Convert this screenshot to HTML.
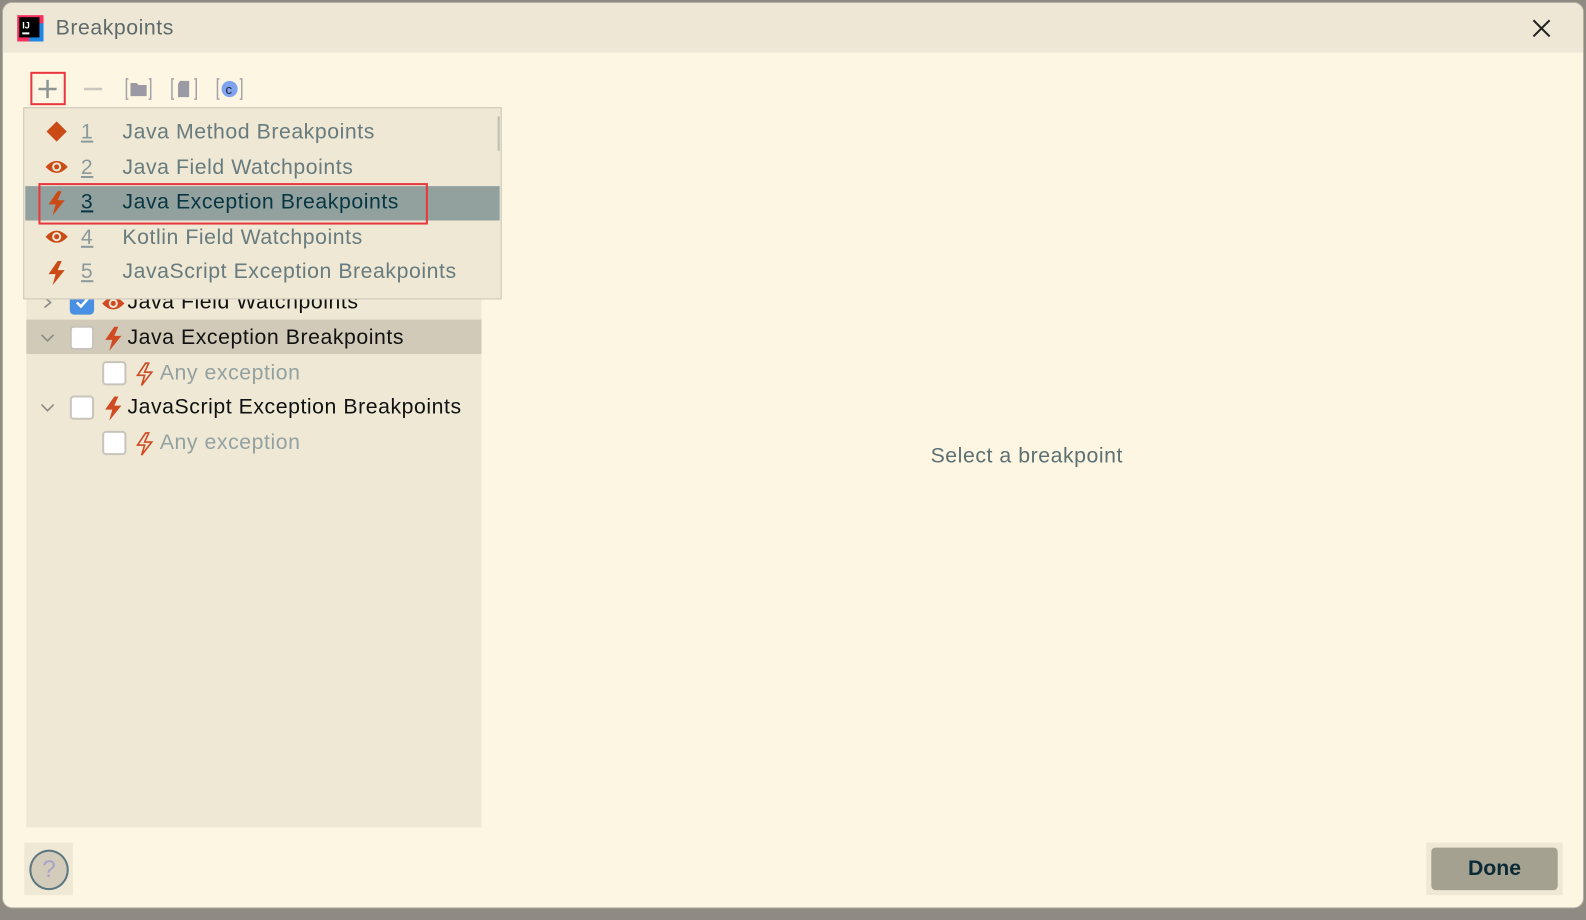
<!DOCTYPE html>
<html><head><style>
*{margin:0;padding:0;box-sizing:border-box}
body{width:1586px;height:910px;background:#8f8b82;font-family:"Liberation Sans","DejaVu Sans",sans-serif;position:relative;overflow:hidden}
.wrap{position:absolute;left:0;top:0;width:1586px;height:910px;transform:scale(1.0115);transform-origin:0 0}
.dlg{position:absolute;left:2px;top:2px;width:1564px;height:896px;background:#fdf6e3;border-radius:10px;overflow:hidden;border:1px solid #b5b0a5}
.title{position:absolute;left:0;top:0;right:0;height:49px;background:#eee7d5}
.abs{position:absolute}
.txt{font-size:21px;white-space:nowrap;letter-spacing:0.55px}
.cb{position:absolute;width:24px;height:24px;border:2px solid #c8c4bb;border-radius:4px;background:#fff}
</style></head><body>
<div class="wrap">
<div class="dlg">
 <div class="title">
  <svg class="abs" style="left:12px;top:10px" width="30" height="30"><rect x="2" y="2" width="26" height="26" fill="#f9305f"/><rect x="14" y="10" width="14" height="18" fill="#1e88e5"/><rect x="4" y="4" width="20" height="20" fill="#000"/><text x="7" y="15" fill="#fff" font-size="9" font-weight="bold" font-family="Liberation Sans">IJ</text><rect x="7" y="19" width="7" height="2" fill="#fff"/></svg>
  <div class="abs txt" style="left:52px;top:13px;color:#5f6a6b">Breakpoints</div>
  <svg class="abs" style="left:1511px;top:15px" width="20" height="20"><path d="M2 2L18 18M18 2L2 18" stroke="#222" stroke-width="2"/></svg>
 </div>
 <div class="abs" style="left:27px;top:68px;width:35px;height:33px;border:2px solid #e8383d"></div>
 <svg class="abs" style="left:33px;top:74px" width="22" height="22"><path d="M11 2V20M2 11H20" stroke="#8d9496" stroke-width="2.5"/></svg>
 <svg class="abs" style="left:78px;top:74px" width="22" height="22"><path d="M2 11H20" stroke="#c9c7c0" stroke-width="2.5"/></svg>
 <svg class="abs" style="left:121px;top:73px" width="26" height="24"><path d="M3 2H1V22H3M23 2H25V22H23" stroke="#a5a3a8" stroke-width="1.5" fill="none"/><path d="M5 6H11L13 8H21V19H5Z" fill="#9b9aa4"/></svg>
 <svg class="abs" style="left:166px;top:73px" width="26" height="24"><path d="M3 2H1V22H3M23 2H25V22H23" stroke="#a5a3a8" stroke-width="1.5" fill="none"/><path d="M9 4H18V20H7V7Z" fill="#9b9aa4"/></svg>
 <svg class="abs" style="left:211px;top:73px" width="26" height="24"><path d="M3 2H1V22H3M23 2H25V22H23" stroke="#a5a3a8" stroke-width="1.5" fill="none"/><circle cx="13" cy="12" r="8" fill="#7fa3ee"/><text x="9" y="17" font-size="13" font-family="Liberation Sans" fill="#223">c</text></svg>
 <div class="abs" style="left:23px;top:103px;width:450px;height:712px;background:#eee8d5"></div>
 <div class="abs" style="left:23px;top:313px;width:450px;height:34px;background:#d1cab9"></div>
 <svg class="abs" style="left:36px;top:288px" width="16" height="16"><path d="M5 3L11 8L5 13" stroke="#8a8a86" stroke-width="1.6" fill="none"/></svg>
 <div class="cb" style="left:66px;top:284px;background:#4a90e2;border-color:#4a90e2"></div>
 <svg class="abs" style="left:69px;top:286px" width="20" height="20"><path d="M4 10L8 14L16 5" stroke="#fff" stroke-width="2.5" fill="none"/></svg>
 <svg class="abs" style="left:97px;top:287px" width="24" height="20"><path d="M1 10Q12 -2 23 10Q12 22 1 10Z" fill="#d04a22"/><circle cx="12" cy="10" r="4.5" fill="#eee8d5"/><circle cx="12" cy="10" r="2.5" fill="#d04a22"/></svg>
 <div class="abs txt" style="left:123px;top:284px;color:#111">Java Field Watchpoints</div>
 <svg class="abs" style="left:36px;top:323px" width="16" height="16"><path d="M2 5L8 11L14 5" stroke="#8a8a86" stroke-width="1.6" fill="none"/></svg>
 <div class="cb" style="left:66px;top:319px"></div>
 <svg class="abs" style="left:99px;top:319px" width="20" height="26"><path d="M11 1L2 14H9L6 25L18 10H11L15 1Z" fill="#d04a22"/></svg>
 <div class="abs txt" style="left:123px;top:319px;color:#111">Java Exception Breakpoints</div>
 <div class="cb" style="left:98px;top:354px"></div>
 <svg class="abs" style="left:130px;top:354px" width="20" height="26"><path d="M11 2L3 14H10L7 24L17 11H10L14 2Z" fill="none" stroke="#d04a22" stroke-width="1.6"/></svg>
 <div class="abs txt" style="left:155px;top:354px;color:#93a1a1">Any exception</div>
 <svg class="abs" style="left:36px;top:392px" width="16" height="16"><path d="M2 5L8 11L14 5" stroke="#8a8a86" stroke-width="1.6" fill="none"/></svg>
 <div class="cb" style="left:66px;top:388px"></div>
 <svg class="abs" style="left:99px;top:388px" width="20" height="26"><path d="M11 1L2 14H9L6 25L18 10H11L15 1Z" fill="#d04a22"/></svg>
 <div class="abs txt" style="left:123px;top:388px;color:#111">JavaScript Exception Breakpoints</div>
 <div class="cb" style="left:98px;top:423px"></div>
 <svg class="abs" style="left:130px;top:423px" width="20" height="26"><path d="M11 2L3 14H10L7 24L17 11H10L14 2Z" fill="none" stroke="#d04a22" stroke-width="1.6"/></svg>
 <div class="abs txt" style="left:155px;top:423px;color:#93a1a1">Any exception</div>
 <div class="abs" style="left:20px;top:103px;width:473px;height:190px;background:#eee8d5;border:1px solid #cbc5b5">
  <div class="abs" style="left:1px;top:77px;width:469px;height:34px;background:#93a19e"></div>
  <div class="abs" style="left:468px;top:8px;width:2px;height:34px;background:#c0bcb0"></div>
 </div>
 <div class="abs" style="left:35px;top:178px;width:385px;height:41px;border:2px solid #e8383d"></div>
 <svg class="abs" style="left:41px;top:115px" width="24" height="24"><path d="M12 2L22 12L12 22L2 12Z" fill="#cb4b16"/></svg>
 <svg class="abs" style="left:41px;top:152px" width="24" height="20"><path d="M1 10Q12 -2 23 10Q12 22 1 10Z" fill="#cb4b16"/><circle cx="12" cy="10" r="4.5" fill="#eee8d5"/><circle cx="12" cy="10" r="2.5" fill="#cb4b16"/></svg>
 <svg class="abs" style="left:43px;top:185px" width="20" height="26"><path d="M11 1L2 14H9L6 25L18 10H11L15 1Z" fill="#cb4b16"/></svg>
 <svg class="abs" style="left:41px;top:221px" width="24" height="20"><path d="M1 10Q12 -2 23 10Q12 22 1 10Z" fill="#cb4b16"/><circle cx="12" cy="10" r="4.5" fill="#eee8d5"/><circle cx="12" cy="10" r="2.5" fill="#cb4b16"/></svg>
 <svg class="abs" style="left:43px;top:254px" width="20" height="26"><path d="M11 1L2 14H9L6 25L18 10H11L15 1Z" fill="#cb4b16"/></svg>
 <div class="abs txt" style="left:77px;top:116px;color:#8c9a9c;text-decoration:underline">1</div>
 <div class="abs txt" style="left:77px;top:151px;color:#8c9a9c;text-decoration:underline">2</div>
 <div class="abs txt" style="left:77px;top:185px;color:#073642;text-decoration:underline">3</div>
 <div class="abs txt" style="left:77px;top:220px;color:#8c9a9c;text-decoration:underline">4</div>
 <div class="abs txt" style="left:77px;top:254px;color:#8c9a9c;text-decoration:underline">5</div>
 <div class="abs txt" style="left:118px;top:116px;color:#687b7e">Java Method Breakpoints</div>
 <div class="abs txt" style="left:118px;top:151px;color:#687b7e">Java Field Watchpoints</div>
 <div class="abs txt" style="left:118px;top:185px;color:#073642">Java Exception Breakpoints</div>
 <div class="abs txt" style="left:118px;top:220px;color:#687b7e">Kotlin Field Watchpoints</div>
 <div class="abs txt" style="left:118px;top:254px;color:#687b7e">JavaScript Exception Breakpoints</div>
 <div class="abs txt" style="left:917px;top:436px;color:#5d7072">Select a breakpoint</div>
 <div class="abs" style="left:21px;top:830px;width:48px;height:52px;background:#eee8d5"></div>
 <div class="abs" style="left:26px;top:837px;width:39px;height:40px;border-radius:50%;border:2px solid #5b7780;background:#d3ccbb;color:#a7a3c8;font-size:24px;text-align:center;line-height:36px">?</div>
 <div class="abs" style="left:1407px;top:830px;width:135px;height:52px;background:#eee8d5"></div>
 <div class="abs" style="left:1412px;top:835px;width:125px;height:42px;border-radius:4px;background:#a5a191;color:#0a2a36;font-size:21px;font-weight:bold;text-align:center;line-height:42px">Done</div>
</div>
</div>
</body></html>
